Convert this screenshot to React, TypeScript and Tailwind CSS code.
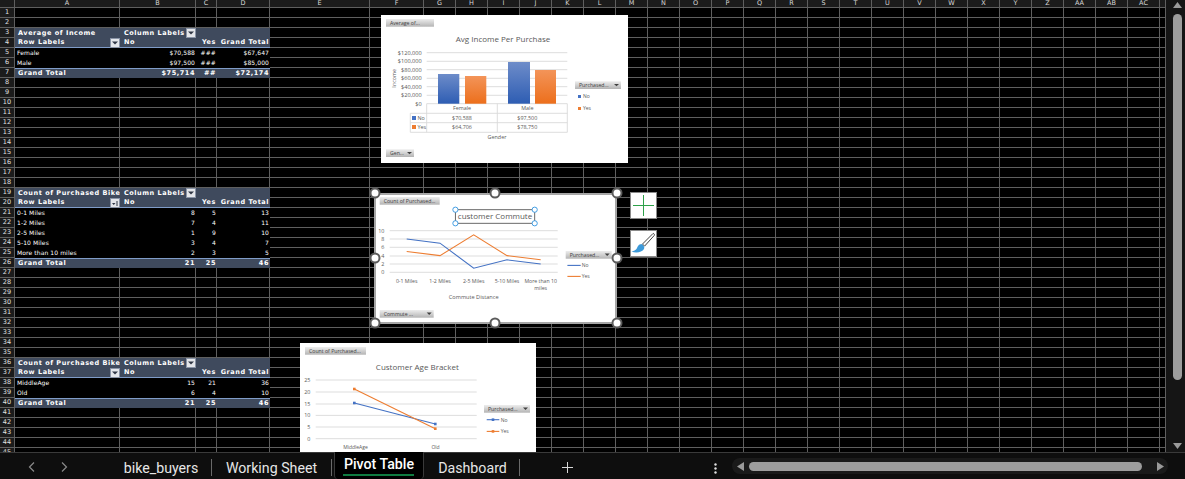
const FONT_UI = "font-['Roboto','Noto_Sans',sans-serif]";

const COLUMNS = ['A', 'B', 'C', 'D', 'E', 'F', 'G', 'H', 'I', 'J', 'K', 'L', 'M', 'N', 'O', 'P', 'Q', 'R', 'S', 'T', 'U', 'V', 'W', 'X', 'Y', 'Z', 'AA', 'AB', 'AC', ''];
const ROW_GRID = 'grid grid-cols-[15px_105px_76px_21px_53px_100px_54px_repeat(23,32px)_6px]';

type PivotRow = {
  kind: 'top' | 'head' | 'data' | 'total';
  cells: string[];
  button?: 'down' | 'sort';
};

const PIVOT_ROWS: Record<number, PivotRow> = {
  3: { kind: 'top', cells: ['Average of Income', 'Column Labels', '', ''] },
  4: { kind: 'head', cells: ['Row Labels', 'No', 'Yes', 'Grand Total'], button: 'down' },
  5: { kind: 'data', cells: ['Female', '$70,588', '###', '$67,647'] },
  6: { kind: 'data', cells: ['Male', '$97,500', '###', '$85,000'] },
  7: { kind: 'total', cells: ['Grand Total', '$75,714', '##', '$72,174'] },
  19: { kind: 'top', cells: ['Count of Purchased Bike', 'Column Labels', '', ''] },
  20: { kind: 'head', cells: ['Row Labels', 'No', 'Yes', 'Grand Total'], button: 'sort' },
  21: { kind: 'data', cells: ['0-1 Miles', '8', '5', '13'] },
  22: { kind: 'data', cells: ['1-2 Miles', '7', '4', '11'] },
  23: { kind: 'data', cells: ['2-5 Miles', '1', '9', '10'] },
  24: { kind: 'data', cells: ['5-10 Miles', '3', '4', '7'] },
  25: { kind: 'data', cells: ['More than 10 miles', '2', '3', '5'] },
  26: { kind: 'total', cells: ['Grand Total', '21', '25', '46'] },
  36: { kind: 'top', cells: ['Count of Purchased Bike', 'Column Labels', '', ''] },
  37: { kind: 'head', cells: ['Row Labels', 'No', 'Yes', 'Grand Total'], button: 'down' },
  38: { kind: 'data', cells: ['MiddleAge', '15', '21', '36'] },
  39: { kind: 'data', cells: ['Old', '6', '4', '10'] },
  40: { kind: 'total', cells: ['Grand Total', '21', '25', '46'] },
};

function FilterButton({ kind }: { kind: 'down' | 'sort' }) {
  return (
    <span className="absolute right-0 top-0 flex h-[10px] w-[10px] items-center justify-center border border-[#8a94a6] bg-[#e4e6ea]">
      {kind === 'down' ? (
        <svg width="6" height="4" viewBox="0 0 6 4">
          <path d="M0 0.5h6L3 3.5z" fill="#2f3644" />
        </svg>
      ) : (
        <svg width="6" height="6" viewBox="0 0 6 6">
          <path d="M0 3h3.5L1.7 5z" fill="#2f3644" />
          <rect x="4.5" y="1" width="1" height="5" fill="#2f3644" />
        </svg>
      )}
    </span>
  );
}

function PivotCells({ row }: { row: PivotRow }) {
  const banded = row.kind !== 'data';
  const bg = banded ? 'bg-[#3f4a5d]' : 'bg-black';
  const rule =
    row.kind === 'head'
      ? 'border-b border-[#7f9cc8]'
      : row.kind === 'total'
        ? 'border-t border-[#7f9cc8]'
        : '';
  const text = banded
    ? "font-['DejaVu_Sans',sans-serif] text-[6.5px] font-bold tracking-[0.55px]"
    : "font-['DejaVu_Sans',sans-serif] text-[6px] tracking-[0.1px]";

  return (
    <>
      {row.cells.map((cell, i) => {
        const rightAlign =
          i > 0 && (row.kind === 'data' || row.kind === 'total' || (row.kind === 'head' && i > 1));
        const pad = rightAlign ? 'justify-end pr-[1px]' : i === 1 ? 'pl-[4px]' : row.kind === 'data' ? 'pl-[2px]' : 'pl-[3px]';
        return (
          <div
            key={i}
            className={`relative flex h-[10px] items-center overflow-visible whitespace-nowrap leading-none text-white ${bg} ${rule} ${text} ${pad}`}
          >
            {cell}
            {i === 0 && row.button ? <FilterButton kind={row.button} /> : null}
            {i === 1 && row.kind === 'top' ? <FilterButton kind="down" /> : null}
          </div>
        );
      })}
    </>
  );
}

function SheetRow({ n }: { n: number }) {
  const pivot = PIVOT_ROWS[n];
  const blank = Array.from({ length: COLUMNS.length - (pivot ? 4 : 0) });
  return (
    <div className={`${ROW_GRID} h-[10px]`}>
      <div className="flex h-[10px] items-center justify-center border-b border-r border-[#5f5f5f] bg-[#1b1b1b] font-['DejaVu_Sans',sans-serif] text-[6.5px] leading-none text-[#e0e0e0]">
        {n}
      </div>
      {pivot ? <PivotCells row={pivot} /> : null}
      {blank.map((_, i) => (
        <div key={i} className="h-[10px] border-b border-r border-[#5f5f5f] bg-black" />
      ))}
    </div>
  );
}

function FieldButton({ x, y, w, label, arrow }: { x: number; y: number; w: number; label: string; arrow?: boolean }) {
  return (
    <g>
      <rect x={x} y={y} width={w} height={7.7} fill="url(#fieldFill)" />
      <text x={x + 4} y={y + 5.6} fontSize="5.2" fill="#404040">
        {label}
      </text>
      {arrow ? <path d={`M${x + w - 7} ${y + 2.6}h5l-2.5 2.4z`} fill="#404040" /> : null}
    </g>
  );
}

function GridLines({ x1, x2, ys }: { x1: number; x2: number; ys: number[] }) {
  return (
    <>
      {ys.map((y) => (
        <line key={y} x1={x1} x2={x2} y1={y} y2={y} stroke="#d9d9d9" strokeWidth="0.9" />
      ))}
    </>
  );
}

function Defs() {
  return (
    <defs>
      <linearGradient id="fieldFill" x1="0" y1="0" x2="0" y2="1">
        <stop offset="0" stopColor="#ededed" />
        <stop offset="1" stopColor="#b4b4b4" />
      </linearGradient>
      <linearGradient id="barBlue" x1="0" y1="0" x2="0" y2="1">
        <stop offset="0" stopColor="#6d8cc9" />
        <stop offset="1" stopColor="#2e5db3" />
      </linearGradient>
      <linearGradient id="barOrange" x1="0" y1="0" x2="0" y2="1">
        <stop offset="0" stopColor="#f39459" />
        <stop offset="1" stopColor="#ec6f1c" />
      </linearGradient>
    </defs>
  );
}

function IncomeChart() {
  const axis = ['$120,000', '$100,000', '$80,000', '$60,000', '$40,000', '$20,000', '$0'];
  const ys = [37.7, 46.3, 54.7, 63.3, 71.7, 80.3, 88.7];
  return (
    <div className="absolute left-[381px] top-[15px] h-[148px] w-[247px] bg-white">
      <svg width="247" height="148" viewBox="0 0 247 148" fontFamily="'Open Sans', sans-serif">
        <Defs />
        <FieldButton x={5} y={4} w={48} label="Average of..." />
        <text x={122} y={27} fontSize="8" fill="#595959" textAnchor="middle">
          Avg Income Per Purchase
        </text>
        <GridLines x1={45.7} x2={186.3} ys={ys} />
        {axis.map((label, i) => (
          <text key={label} x={40.7} y={ys[i] + 2} fontSize="5.6" fill="#595959" textAnchor="end">
            {label}
          </text>
        ))}
        <text transform="translate(14.5 63.3) rotate(-90)" fontSize="5.4" fill="#595959" textAnchor="middle">
          Income
        </text>
        <rect x={57} y={59} width={21.3} height={29.7} fill="url(#barBlue)" />
        <rect x={84} y={61} width={21.3} height={27.7} fill="url(#barOrange)" />
        <rect x={127} y={47} width={22} height={41.7} fill="url(#barBlue)" />
        <rect x={154} y={55} width={21} height={33.7} fill="url(#barOrange)" />
        <g stroke="#d9d9d9" strokeWidth="0.9">
          <path d="M45.7 88.7V117.3M116.3 88.7V117.3M186.3 88.7V117.3M29.3 98.3V117.3" fill="none" />
          <path d="M29.3 98.3H186.3M29.3 107.7H186.3M29.3 117.3H186.3" fill="none" />
        </g>
        <g fontSize="5.4" fill="#595959" textAnchor="middle">
          <text x={81} y={95.3}>Female</text>
          <text x={146.3} y={95.3}>Male</text>
          <text x={81} y={105}>$70,588</text>
          <text x={146.3} y={105}>$97,500</text>
          <text x={81} y={114.4}>$64,706</text>
          <text x={146.3} y={114.4}>$78,750</text>
          <text x={116} y={124}>Gender</text>
        </g>
        <rect x={31} y={101} width={4} height={4} fill="#4472c4" />
        <rect x={31} y={110} width={4} height={4} fill="#ed7d31" />
        <text x={36.5} y={105} fontSize="5.4" fill="#595959">No</text>
        <text x={36.5} y={114.4} fontSize="5.4" fill="#595959">Yes</text>
        <FieldButton x={5} y={134.3} w={28} label="Gen..." arrow />
        <FieldButton x={194} y={66.3} w={46} label="Purchased..." arrow />
        <rect x={197} y={80} width={3} height={3} fill="#4472c4" />
        <rect x={197} y={92} width={3} height={3} fill="#ed7d31" />
        <text x={202} y={83.2} fontSize="5" fill="#595959">No</text>
        <text x={202} y={95.2} fontSize="5" fill="#595959">Yes</text>
      </svg>
    </div>
  );
}

function TitleHandle({ x, y }: { x: number; y: number }) {
  return <circle cx={x} cy={y} r="2.6" fill="#fff" stroke="#2f93e0" strokeWidth="0.9" />;
}

function FrameHandle({ className }: { className: string }) {
  return (
    <span className={`absolute h-[11px] w-[11px] -translate-x-1/2 -translate-y-1/2 rounded-full border-2 border-[#5c5c5c] bg-white ${className}`} />
  );
}

function CommuteChart() {
  const cats = [31.7, 65, 98.7, 132, 165.7];
  const labels = ['0-1 Miles', '1-2 Miles', '2-5 Miles', '5-10 Miles', 'More than 10'];
  const yOf = (v: number) => 78.33 - 4.167 * v;
  const line = (vals: number[]) => vals.map((v, i) => `${cats[i]},${yOf(v)}`).join(' ');
  return (
    <div className="absolute left-[374px] top-[193px] h-[131px] w-[243px] border-2 border-[#a6a6a6] bg-white">
      <svg width="239" height="127" viewBox="1 1 239 127" fontFamily="'Open Sans', sans-serif">
        <Defs />
        <FieldButton x={4.7} y={3} w={60} label="Count of Purchased..." />
        <rect x={80.4} y={15.7} width={79.3} height={13.6} fill="none" stroke="#595959" strokeWidth="0.9" />
        <text x={120} y={25.4} fontSize="8" fill="#595959" textAnchor="middle">
          customer Commute
        </text>
        <TitleHandle x={80.4} y={15.7} />
        <TitleHandle x={159.7} y={15.7} />
        <TitleHandle x={80.4} y={29.3} />
        <TitleHandle x={159.7} y={29.3} />
        <GridLines x1={14.7} x2={182.7} ys={[36.7, 45, 53.3, 62, 70, 78.3]} />
        {[10, 8, 6, 4, 2, 0].map((v) => (
          <text key={v} x={9.4} y={yOf(v) + 1.9} fontSize="5.4" fill="#595959" textAnchor="end">
            {v}
          </text>
        ))}
        <polyline points={line([8, 7, 1, 3, 2])} fill="none" stroke="#4472c4" strokeWidth="1.1" />
        <polyline points={line([5, 4, 9, 4, 3])} fill="none" stroke="#ed7d31" strokeWidth="1.1" />
        <g fontSize="5.2" fill="#595959" textAnchor="middle">
          {labels.map((label, i) => (
            <text key={label} x={cats[i]} y={88.6}>
              {label}
            </text>
          ))}
          <text x={165.7} y={96}>miles</text>
          <text x={98.7} y={104.6} fontSize="5.6">Commute Distance</text>
        </g>
        <FieldButton x={4.7} y={116} w={54} label="Commute ..." arrow />
        <FieldButton x={190.7} y={57} w={46} label="Purchased..." arrow />
        <line x1={192.4} x2={205.7} y1={71.4} y2={71.4} stroke="#4472c4" strokeWidth="1.1" />
        <line x1={192.4} x2={205.7} y1={82.4} y2={82.4} stroke="#ed7d31" strokeWidth="1.1" />
        <text x={206.7} y={73.2} fontSize="5" fill="#595959">No</text>
        <text x={206.7} y={84.2} fontSize="5" fill="#595959">Yes</text>
      </svg>
      <FrameHandle className="left-[-1px] top-[-2px]" />
      <FrameHandle className="left-[119px] top-[-2px]" />
      <FrameHandle className="left-[241px] top-[-2px]" />
      <FrameHandle className="left-[-1px] top-[63px]" />
      <FrameHandle className="left-[241px] top-[63px]" />
      <FrameHandle className="left-[-1px] top-[128px]" />
      <FrameHandle className="left-[119px] top-[128px]" />
      <FrameHandle className="left-[241px] top-[128px]" />
    </div>
  );
}

function ChartTools() {
  return (
    <div className="absolute left-[630px] top-[192px] flex flex-col gap-[11px]">
      <div className="flex h-[27px] w-[27px] items-center justify-center border border-[#8a8a8a] bg-white">
        <svg width="21" height="21" viewBox="0 0 21 21">
          <path d="M10.5 0V21M0 10.5H21" stroke="#2ea14a" strokeWidth="1" fill="none" />
        </svg>
      </div>
      <div className="flex h-[27px] w-[27px] items-center justify-center border border-[#8a8a8a] bg-white">
        <svg width="25" height="25" viewBox="0 0 25 25">
          <path d="M22 2.500 11.500 13l2 2.200L23.200 4.500c.5-1.300-.2-2.200-1.200-2z" fill="#fff" stroke="#444" strokeWidth="1" />
          <path d="M10.500 13c-3 0-4 3-5 5-1 1.200-2.500 2-5 2.500 4 1.700 10.500 1.200 12.500-2.500 1-2-.5-4-2.500-5z" fill="#3d9ad9" />
        </svg>
      </div>
    </div>
  );
}

function AgeChart() {
  const ys = [37, 49, 61, 72.4, 84, 95.7];
  return (
    <div className="absolute left-[300px] top-[343px] h-[148px] w-[236px] bg-white">
      <svg width="236" height="148" viewBox="0 0 236 148" fontFamily="'Open Sans', sans-serif">
        <Defs />
        <FieldButton x={5} y={4} w={61} label="Count of Purchased..." />
        <text x={117.3} y={27} fontSize="8" fill="#595959" textAnchor="middle">
          Customer Age Bracket
        </text>
        <GridLines x1={15.7} x2={176.7} ys={ys} />
        {[25, 20, 15, 10, 5, 0].map((v, i) => (
          <text key={v} x={10.3} y={ys[i] + 1.9} fontSize="5.4" fill="#595959" textAnchor="end">
            {v}
          </text>
        ))}
        <polyline points="54.3,60 135.3,81" fill="none" stroke="#4472c4" strokeWidth="1.1" />
        <polyline points="54.3,46 135.3,85.7" fill="none" stroke="#ed7d31" strokeWidth="1.1" />
        <rect x={53} y={58.7} width={2.6} height={2.6} fill="#4472c4" />
        <rect x={134} y={79.7} width={2.6} height={2.6} fill="#4472c4" />
        <rect x={53} y={44.7} width={2.6} height={2.6} fill="#ed7d31" />
        <rect x={134} y={84.4} width={2.6} height={2.6} fill="#ed7d31" />
        <text x={55.5} y={105.6} fontSize="5" fill="#595959" textAnchor="middle">MiddleAge</text>
        <text x={135.5} y={105.6} fontSize="5" fill="#595959" textAnchor="middle">Old</text>
        <FieldButton x={184} y={62} w={46} label="Purchased..." arrow />
        <line x1={186.7} x2={199.3} y1={76.7} y2={76.7} stroke="#4472c4" strokeWidth="1.1" />
        <rect x={191.7} y={75.4} width={2.6} height={2.6} fill="#4472c4" />
        <line x1={186.7} x2={199.3} y1={88.4} y2={88.4} stroke="#ed7d31" strokeWidth="1.1" />
        <rect x={191.7} y={87.1} width={2.6} height={2.6} fill="#ed7d31" />
        <text x={200.7} y={78.5} fontSize="5" fill="#595959">No</text>
        <text x={200.7} y={90.2} fontSize="5" fill="#595959">Yes</text>
      </svg>
    </div>
  );
}

function Sheet() {
  const rows = Array.from({ length: 45 }, (_, i) => i + 1);
  return (
    <div className="relative h-[452px] w-[1166px] overflow-hidden">
      <div className={`${ROW_GRID} h-[8px]`}>
        <div className="border-b border-r border-[#5f5f5f] bg-[#1b1b1b]" />
        {COLUMNS.map((col, i) => (
          <div
            key={i}
            className="flex h-[8px] items-center justify-center border-b border-r border-[#5f5f5f] bg-[#1b1b1b] font-['DejaVu_Sans',sans-serif] text-[6.5px] leading-none text-[#d8d8d8]"
          >
            {col}
          </div>
        ))}
      </div>
      {rows.map((n) => (
        <SheetRow key={n} n={n} />
      ))}
      <IncomeChart />
      <CommuteChart />
      <ChartTools />
      <AgeChart />
    </div>
  );
}

function VerticalScrollbar() {
  return (
    <div className="flex h-[452px] w-[19px] flex-col items-center bg-[#151515] pl-[3px] pt-[2px]">
      <svg width="9" height="6" viewBox="0 0 9 6">
        <path d="M0 6 4.500 0 9 6z" fill="#9a9a9a" />
      </svg>
      <div className="mt-[6px] h-[366px] w-[9px] rounded-full bg-[#9d9d9d]" />
      <div className="flex-1" />
      <svg className="mb-[3px]" width="9" height="6" viewBox="0 0 9 6">
        <path d="M0 0 4.500 6 9 0z" fill="#9a9a9a" />
      </svg>
    </div>
  );
}

function SheetTab({ label, active }: { label: string; active?: boolean }) {
  if (active) {
    return (
      <div className="relative -mt-[1px] flex h-[27px] w-[90px] shrink-0 justify-center rounded-b-[4px] border-x border-[#3a3a3a] bg-black pt-[2px] text-[14.2px] font-medium leading-[20px] text-white">
        {label}
        <span className="absolute bottom-[3px] left-[8px] h-[2px] w-[71px] bg-[#107c41]" />
      </div>
    );
  }
  return <div className="flex shrink-0 justify-center pt-[3px] text-[14.2px] leading-[24px] text-[#e6e6e6]">{label}</div>;
}

function TabSeparator() {
  return <span className="mt-[6px] h-[17px] w-px shrink-0 bg-[#6a6a6a]" />;
}

function TabBar() {
  return (
    <div className={`flex h-[27px] items-start border-t border-[#3a3a3a] bg-[#0e0e0e] ${FONT_UI}`}>
      <div className="flex w-[111px] shrink-0 items-center gap-[24px] pl-[28px] pt-[9px]">
        <svg width="8" height="10" viewBox="0 0 8 10">
          <path d="M6 0.500 1.500 5 6 9.500" fill="none" stroke="#8a8a8a" strokeWidth="1.200" />
        </svg>
        <svg width="8" height="10" viewBox="0 0 8 10">
          <path d="M2 0.500 6.500 5 2 9.500" fill="none" stroke="#8a8a8a" strokeWidth="1.200" />
        </svg>
      </div>
      <div className="w-[100px] shrink-0">
        <SheetTab label="bike_buyers" />
      </div>
      <TabSeparator />
      <div className="w-[119px] shrink-0">
        <SheetTab label="Working Sheet" />
      </div>
      <TabSeparator />
      <div className="ml-[2px]">
        <SheetTab label="Pivot Table" active />
      </div>
      <div className="ml-[2px]">
        <TabSeparator />
      </div>
      <div className="w-[93px] shrink-0">
        <SheetTab label="Dashboard" />
      </div>
      <TabSeparator />
      <svg className="ml-[41px] mt-[8px] shrink-0" width="13" height="13" viewBox="0 0 13 13">
        <path d="M6.500 1V12M1 6.500H12" stroke="#d8d8d8" strokeWidth="1" fill="none" />
      </svg>
      <svg className="ml-[140px] mt-[10px] shrink-0" width="3" height="11" viewBox="0 0 3 11">
        <circle cx="1.500" cy="1.500" r="1.200" fill="#e0e0e0" />
        <circle cx="1.500" cy="5.500" r="1.200" fill="#e0e0e0" />
        <circle cx="1.500" cy="9.500" r="1.200" fill="#e0e0e0" />
      </svg>
      <div className="ml-[15px] mt-[5px] flex h-[16px] w-[436px] shrink-0 items-center rounded-full bg-[#1a1a1a] pl-[5px] pr-[4px]">
        <svg width="7" height="9" viewBox="0 0 7 9">
          <path d="M7 0 0 4.500 7 9z" fill="#9a9a9a" />
        </svg>
        <div className="ml-[5px] h-[9px] w-[393px] rounded-full bg-[#9d9d9d]" />
        <div className="flex-1" />
        <svg width="7" height="9" viewBox="0 0 7 9">
          <path d="M0 0 7 4.500 0 9z" fill="#9a9a9a" />
        </svg>
      </div>
    </div>
  );
}

export default function App() {
  return (
    <div className="h-[479px] w-[1185px] overflow-hidden bg-black opacity-[0.999]">
      <div className="flex">
        <Sheet />
        <VerticalScrollbar />
      </div>
      <TabBar />
    </div>
  );
}
